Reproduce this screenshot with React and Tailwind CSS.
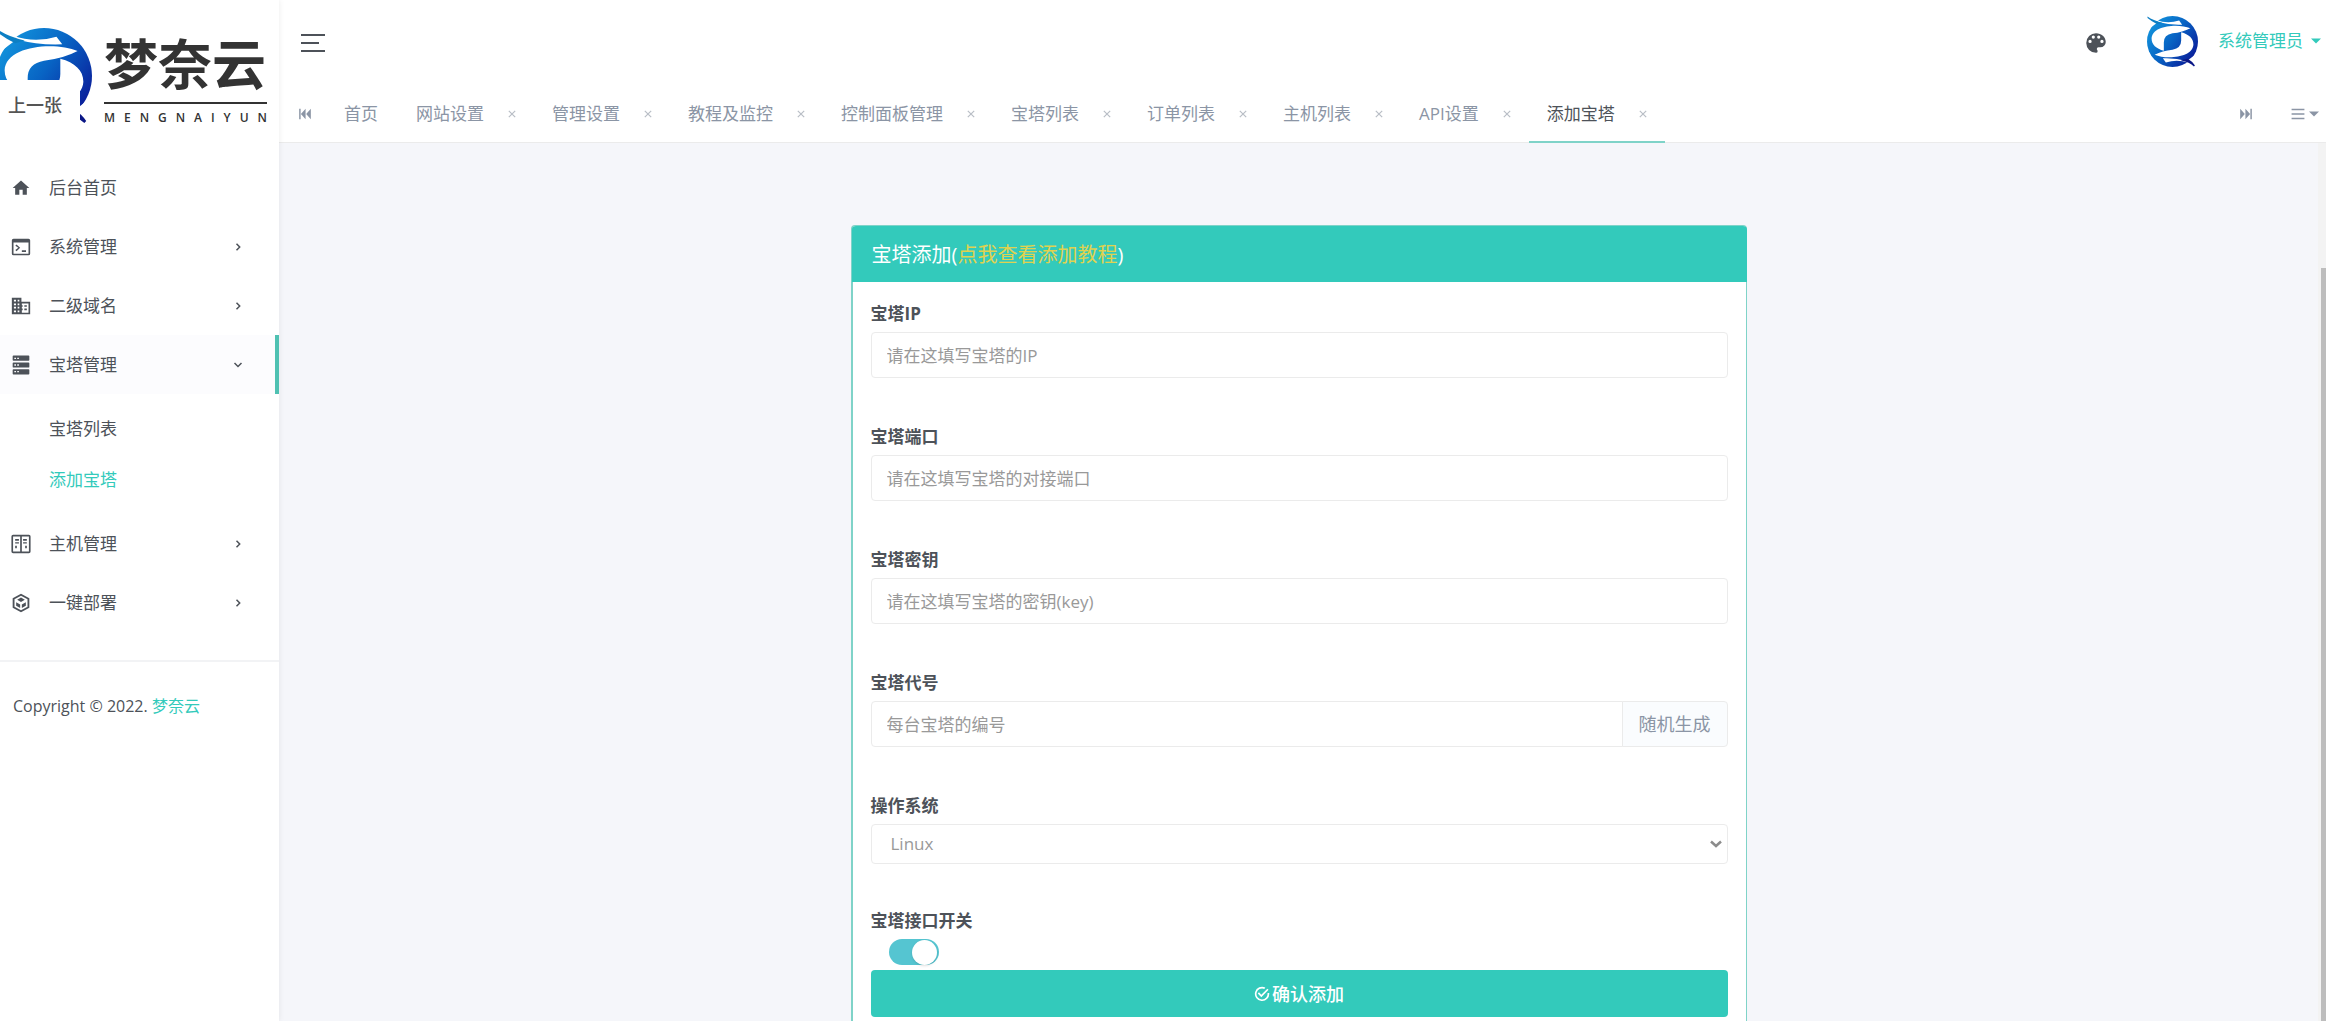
import React, { useState } from "react";

function Icon({ d, className }) {
  return (
    <svg viewBox="0 0 24 24" fill="currentColor" className={className} aria-hidden="true">
      <path d={d} fillRule="evenodd" />
    </svg>
  );
}

const icons = {
  home: "M10 20V14H14V20H19V12H22L12 3L2 12H5V20Z",
  console:
    "M13 18V16H18V18ZM6.6 9L5.2 10.4L8.8 13L5.2 15.6L6.6 17L11 13ZM21 2A2 2 0 0 1 23 4V20A2 2 0 0 1 21 22H3A2 2 0 0 1 1 20V4A2 2 0 0 1 3 2ZM3 6.500V20H21V6.500Z",
  domain:
    "M19 15H16V17H19M19 11H16V13H19M21 20H13V17H14V15H13V13H14V11H13V9H21M10 6.500H8V4.500H10M10 11H8V9H10M10 15H8V13H10M10 19.500H8V17.500H10M6 6.500H3.500V4.500H6M6 11H3.500V9H6M6 15H3.500V13H6M6 19.500H3.500V17.500H6M12.500 7V2H1V22H23V7Z",
  server:
    "M3 0.500H21A1 1 0 0 1 22 1.500V6A1 1 0 0 1 21 7H3A1 1 0 0 1 2 6V1.500A1 1 0 0 1 3 0.500ZM3 9H21A1 1 0 0 1 22 10V14A1 1 0 0 1 21 15H3A1 1 0 0 1 2 14V10A1 1 0 0 1 3 9ZM3 17H21A1 1 0 0 1 22 18V22.500A1 1 0 0 1 21 23.500H3A1 1 0 0 1 2 22.500V18A1 1 0 0 1 3 17ZM4 3.200V4.800H6V3.200ZM7.500 3.200V4.800H9.500V3.200ZM4 11.200V12.800H6V11.200ZM7.500 11.200V12.800H9.500V11.200ZM4 19.200V20.800H6V19.200ZM7.500 19.200V20.800H9.500V19.200Z",
  host:
    "M2.500 1H21.500A2 2 0 0 1 23.500 3V21A2 2 0 0 1 21.500 23H2.500A2 2 0 0 1 0.500 21V3A2 2 0 0 1 2.500 1ZM2.500 3V21H11V3ZM13 3V21H21.500V3ZM5 6H9.500V8H5ZM5 10H9.500V11.500H5ZM5 14H7V17H5ZM14.500 6H19V8H14.500ZM14.500 10H19V11.500H14.500ZM17 14H19V17H17Z",
  cube:
    "M12 0.800L22 6.400V17.600L12 23.200L2 17.600V6.400ZM12 3.200L4.200 7.600V16.400L12 20.800L19.800 16.400V7.600ZM12 5.500L16.600 8.200L12 10.900L7.400 8.200ZM6.200 11L11 13.700V18L6.200 15.200ZM17.800 11V15.200L13 18V13.700Z",
  palette:
    "M17.500 12A1.500 1.500 0 0 1 16 10.500A1.500 1.500 0 0 1 17.500 9A1.500 1.500 0 0 1 19 10.500A1.500 1.500 0 0 1 17.500 12M14.500 8A1.500 1.500 0 0 1 13 6.500A1.500 1.500 0 0 1 14.500 5A1.500 1.500 0 0 1 16 6.500A1.500 1.500 0 0 1 14.500 8M9.500 8A1.500 1.500 0 0 1 8 6.500A1.500 1.500 0 0 1 9.500 5A1.500 1.500 0 0 1 11 6.500A1.500 1.500 0 0 1 9.500 8M6.500 12A1.500 1.500 0 0 1 5 10.500A1.500 1.500 0 0 1 6.500 9A1.500 1.500 0 0 1 8 10.500A1.500 1.500 0 0 1 6.500 12M12 3A9 9 0 0 0 3 12A9 9 0 0 0 12 21A1.500 1.500 0 0 0 13.500 19.500C13.500 19.110 13.350 18.760 13.110 18.500C12.880 18.230 12.730 17.880 12.730 17.500A1.500 1.500 0 0 1 14.230 16H16A5 5 0 0 0 21 11C21 6.580 16.970 3 12 3Z",
  skipBack: "M2 3H4.500V21H2ZM13 3V21L5 12ZM22 3V21L14 12Z",
  skipForward: "M19.500 3H22V21H19.500ZM11 3V21L19 12ZM2 3V21L10 12Z",
  list: "M1 3H23V5.500H1ZM1 10.800H23V13.200H1ZM1 18.500H23V21H1Z",
  caret: "M0 6H24L12 18Z",
  check:
    "M20.200 10.500A8.300 8.300 0 1 1 15.500 4.400L17 2.200A10.800 10.800 0 1 0 22.800 10.500ZM7.500 9.500L5.600 11.400L11 16.800L21.800 5.800L20 4L11 13Z",
};

function Emblem({ id, className }) {
  return (
    <svg viewBox="0 0 100 100" className={className} aria-hidden="true">
      <defs>
        <linearGradient id={id} x1="0" y1="0.1" x2="1" y2="0.8">
          <stop offset="0" stopColor="#149be0" />
          <stop offset="0.500" stopColor="#0864c4" />
          <stop offset="1" stopColor="#0a1796" />
        </linearGradient>
      </defs>
      <circle cx="50" cy="50" r="50" fill={`url(#${id})`} />
      <g fill="#fff">
        <path d="M18 8Q40 16 63 9L69 17Q44 18 22 12Z" />
        <path d="M82 92Q60 84 37 91L31 83Q56 82 78 88Z" />
        <path d="M85 24C62 14 10 18 9 44C9 56 18 64 33 68V52Q33 37 50 34Q70 32 85 24Z" />
        <path d="M15 76C38 86 90 82 91 56C91 44 82 36 67 32V48Q67 63 50 66Q30 68 15 76Z" />
        <path d="M0 12L16 10L20 13L12 19L0 28Z" />
        <path d="M100 88L84 90L80 87L88 81L100 72Z" />
      </g>
      <path d="M1 1Q12 9 30 13L20 16Q8 10 1 4Z" fill="#0d7fc4" />
      <path d="M92 99Q84 91 66 87L80 84Q90 90 94 97Z" fill="#0a1786" />
    </svg>
  );
}

function Chevron({ open }) {
  return (
    <svg viewBox="0 0 10 10" fill="none" stroke="currentColor" strokeWidth="1.500" className="h-2.5 w-2.5" aria-hidden="true">
      <path d={open ? "M1.500 3L5 6.500L8.500 3" : "M3.500 1.800L6.700 5L3.500 8.200"} />
    </svg>
  );
}

function NavItem({ icon, label, arrow, open }) {
  return (
    <button
      type="button"
      className={
        "flex h-[59px] w-full items-center border-r-4 pr-8 pl-[11px] text-left " +
        (open ? "border-[#4fc1b2] bg-[#fcfcfe]" : "border-transparent")
      }
    >
      <Icon d={icons[icon]} className="h-5 w-5" />
      <span className="ml-[18px] flex-1">{label}</span>
      {arrow && <Chevron open={open} />}
    </button>
  );
}

function Sidebar() {
  return (
    <aside className="relative z-10 flex w-[279px] shrink-0 flex-col bg-white text-[#4d5259] shadow-[0_0_6px_rgba(0,0,0,0.08)]">
      <a href="#home" className="relative block h-[158px] text-[#333]">
        <div className="flex pt-7">
          <Emblem id="emblem-large" className="-ml-1 h-24 w-24 shrink-0" />
          <div className="ml-3 w-[163px]">
            <div className="text-[54px] leading-[72px] font-bold whitespace-nowrap">梦奈云</div>
            <div className="mt-0.5 h-0.5 bg-[#333]" />
            <div className="mt-1.5 flex justify-between text-xs leading-4 font-semibold">
              {"MENGNAIYUN".split("").map((c, i) => (
                <span key={i}>{c}</span>
              ))}
            </div>
          </div>
        </div>
        <span className="absolute top-20 left-0 flex h-[50px] w-20 items-center bg-white pl-2 text-lg font-medium text-[#555]">上一张</span>
      </a>
      <nav className="pb-7">
        <NavItem icon="home" label="后台首页" />
        <NavItem icon="console" label="系统管理" arrow />
        <NavItem icon="domain" label="二级域名" arrow />
        <NavItem icon="server" label="宝塔管理" arrow open />
        <div className="flex flex-col py-[9px]">
          <a href="#list" className="py-3 pl-[49px] leading-[27px]">宝塔列表</a>
          <a href="#add" className="py-3 pl-[49px] leading-[27px] text-[#33cabb]">添加宝塔</a>
        </div>
        <NavItem icon="host" label="主机管理" arrow />
        <NavItem icon="cube" label="一键部署" arrow />
      </nav>
      <footer className="border-t-2 border-[#f2f3f5] px-[13px] py-8 text-base leading-6">
        Copyright © 2022. <a href="#site" className="text-[#33cabb]">梦奈云</a>
      </footer>
    </aside>
  );
}

const tabs = ["网站设置", "管理设置", "教程及监控", "控制面板管理", "宝塔列表", "订单列表", "主机列表", "API设置", "添加宝塔"];

function Header() {
  return (
    <header className="bg-white">
      <div className="flex h-[86px] items-center pr-[5px] pl-[22px]">
        <button type="button" aria-label="切换菜单" className="flex flex-col gap-[6px] text-[#4d5259]">
          <span className="h-0.5 w-6 bg-current" />
          <span className="h-0.5 w-[18px] bg-current" />
          <span className="h-0.5 w-6 bg-current" />
        </button>
        <button type="button" aria-label="主题" className="ml-auto text-[#4d5259]">
          <Icon d={icons.palette} className="h-[26px] w-[26px]" />
        </button>
        <button type="button" className="mb-1 ml-[38px] flex items-center text-[#33cabb]">
          <Emblem id="emblem-small" className="h-[51px] w-[51px]" />
          <span className="ml-5">系统管理员</span>
          <Icon d={icons.caret} className="ml-2 h-2.5 w-2.5" />
        </button>
      </div>
      <div className="flex h-[57px] items-stretch border-b border-[#ebebeb] pr-[7px] text-[#8b95a5]">
        <button type="button" aria-label="向前" className="pr-3.5 pl-[19px]">
          <Icon d={icons.skipBack} className="h-3.5 w-3.5" />
        </button>
        <nav className="flex items-stretch">
          <a href="#home" className="flex items-center pr-5 pl-[18px]">首页</a>
          {tabs.map((t, i) => {
            const active = i === tabs.length - 1;
            return (
              <div
                key={t}
                className={
                  "-mb-px flex items-center border-b-2 px-[18px] " +
                  (active ? "border-[#7fd3c8] text-[#4d5259]" : "border-transparent")
                }
              >
                <a href={"#tab" + i}>{t}</a>
                <button type="button" aria-label={"关闭" + t} className="ml-6 text-[#b9bec6]">
                  <svg viewBox="0 0 8 8" className="h-2 w-2" stroke="currentColor" strokeWidth="1.200" aria-hidden="true">
                    <path d="M0.800 0.800L7.200 7.200M7.200 0.800L0.800 7.200" />
                  </svg>
                </button>
              </div>
            );
          })}
        </nav>
        <button type="button" aria-label="向后" className="ml-auto">
          <Icon d={icons.skipForward} className="h-3.5 w-3.5" />
        </button>
        <button type="button" aria-label="标签操作" className="ml-[38px] flex items-center gap-1">
          <Icon d={icons.list} className="h-3.5 w-3.5" />
          <Icon d={icons.caret} className="h-2.5 w-2.5" />
        </button>
      </div>
    </header>
  );
}

const control =
  "h-[46px] w-full min-w-0 rounded-sm border border-[#ebebeb] bg-white px-[15px] text-[#4d5259] placeholder:text-[#999] outline-none";

function Field({ id, label, children }) {
  return (
    <div className="mb-[44px]">
      <label htmlFor={id} className="mb-[3px] block leading-[30px] font-bold">{label}</label>
      {children}
    </div>
  );
}

function ServerForm() {
  const [code, setCode] = useState("");
  const [on, setOn] = useState(true);
  return (
    <section className="mx-auto mt-[82px] w-[896px] max-w-full rounded border border-l-2 border-[#7fd3c8] bg-white text-[#4d5259]">
      <h1 className="-mx-px rounded-t bg-[#33cabb] px-5 pt-[15px] pb-[13px] text-xl leading-7 text-white">
        宝塔添加(<a href="#guide" className="text-[#e0d24f]">点我查看添加教程</a>)
      </h1>
      <form className="px-[18px] pt-[17px] pb-5" onSubmit={(e) => e.preventDefault()}>
        <Field id="ip" label="宝塔IP">
          <input id="ip" className={control} placeholder="请在这填写宝塔的IP" />
        </Field>
        <Field id="port" label="宝塔端口">
          <input id="port" className={control} placeholder="请在这填写宝塔的对接端口" />
        </Field>
        <Field id="key" label="宝塔密钥">
          <input id="key" className={control} placeholder="请在这填写宝塔的密钥(key)" />
        </Field>
        <Field id="code" label="宝塔代号">
          <div className="flex">
            <input
              id="code"
              className={control + " rounded-r-none"}
              placeholder="每台宝塔的编号"
              value={code}
              onChange={(e) => setCode(e.target.value)}
            />
            <button
              type="button"
              onClick={() => setCode(Math.random().toString(36).slice(2, 8))}
              className="-ml-px shrink-0 rounded-r-sm border border-[#ebebeb] bg-[#fafcfe] px-4 text-lg text-[#8b95a5]"
            >
              随机生成
            </button>
          </div>
        </Field>
        <Field id="os" label="操作系统">
          <div className="relative">
            <select
              id="os"
              className="block h-10 w-full appearance-none rounded-sm border border-[#ebebeb] bg-white px-[19px] text-[#999] outline-none"
            >
              <option>Linux</option>
              <option>Windows</option>
            </select>
            <svg viewBox="0 0 12 8" fill="none" stroke="#8c8c8c" strokeWidth="2.500" className="pointer-events-none absolute top-4 right-1.5 h-2 w-3" aria-hidden="true">
              <path d="M1 1.500L6 6L11 1.500" />
            </svg>
          </div>
        </Field>
        <label htmlFor="api" className="mb-[5px] block leading-[26px] font-bold">宝塔接口开关</label>
        <input
          id="api"
          type="checkbox"
          role="switch"
          checked={on}
          onChange={(e) => setOn(e.target.checked)}
          className="ml-[18px] flex h-[26px] w-[50px] appearance-none items-center rounded-full bg-[#bbb] px-0.5 before:h-[25px] before:w-[25px] before:rounded-full before:bg-white before:shadow checked:justify-end checked:bg-[#55c5d1]"
        />
        <button type="submit" className="mt-[5px] flex h-[47px] w-full items-center justify-center rounded-sm bg-[#33cabb] text-lg font-medium text-white">
          <Icon d={icons.check} className="mr-0.5 h-4 w-4" />
          确认添加
        </button>
      </form>
    </section>
  );
}

export default function App() {
  return (
    <div className="flex h-screen overflow-hidden bg-white pr-[5px] font-['Open_Sans','Noto_Sans_CJK_SC',sans-serif] text-[17px]">
      <Sidebar />
      <div className="flex min-w-0 flex-1 flex-col">
        <Header />
        <div className="flex min-h-0 flex-1 bg-[#f5f6fa]">
          <main className="min-w-0 flex-1 overflow-hidden">
            <ServerForm />
          </main>
          <div className="flex w-2 flex-col items-end bg-[#f3f3f3] pt-[125px]" aria-hidden="true">
            <div className="w-[5px] flex-1 bg-[#bdbdbd]" />
          </div>
        </div>
      </div>
    </div>
  );
}
